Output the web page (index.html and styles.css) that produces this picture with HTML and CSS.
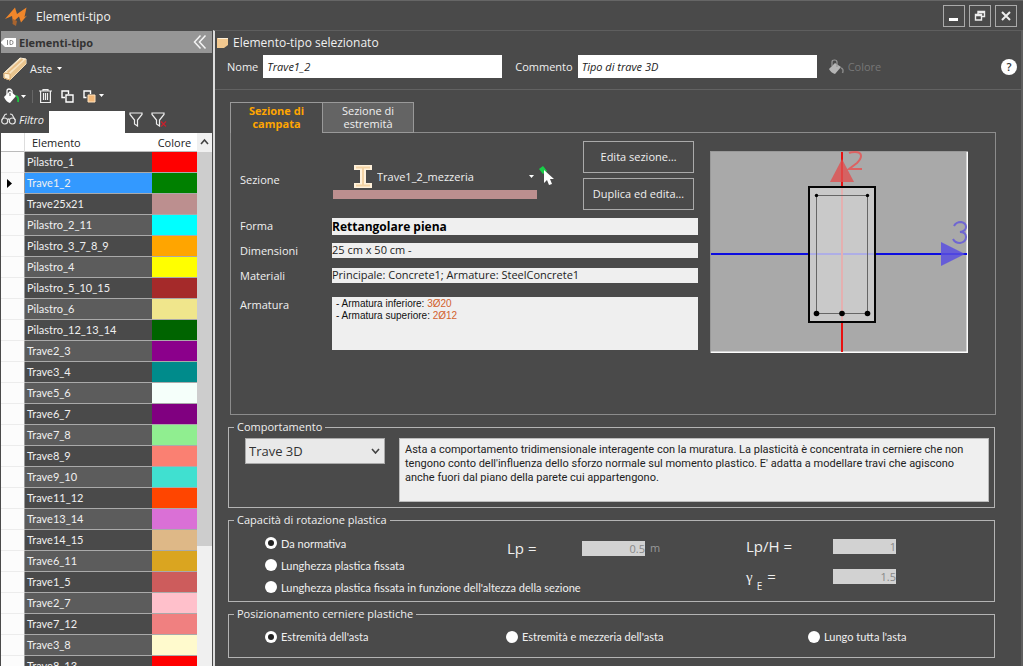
FILE: index.html
```html
<!DOCTYPE html>
<html lang="it">
<head>
<meta charset="utf-8">
<title>Elementi-tipo</title>
<link rel="stylesheet" href="styles.css">
</head>
<body>
<div class="window">
  <header class="titlebar">
    <svg class="logo" width="26" height="24" viewBox="0 0 26 24"><path d="M1 15 11 3.500 13 10 22.500 3.500 20.500 13 23 11.500 17 18.500 15 12.500 9 18 8 12Z" fill="#f0862a"/><path d="M12 22 8.500 20 9 15 13 17Z" fill="#a8642f"/></svg>
    <h1>Elementi-tipo</h1>
    <div class="winbtns">
      <button aria-label="Riduci a icona"><svg width="14" height="14"><path d="M2 9h9v3H2z" fill="#fff"/></svg></button>
      <button aria-label="Ripristina"><svg width="14" height="14" fill="none" stroke="#eee" stroke-width="1.4"><path d="M5 5V2.5h6.500v5H9M5 3.500h6.500M2.500 5.500h6v5.500h-6zM2.500 6.500h6"/></svg></button>
      <button aria-label="Chiudi"><svg width="14" height="14" stroke="#eee" stroke-width="2"><path d="M3 3l8 8M11 3l-8 8"/></svg></button>
    </div>
  </header>

  <aside class="sidebar">
    <div class="side-head">
      <svg width="16" height="9" viewBox="0 0 16 9"><path d="M4 0h11v9H4L0 5V4z" fill="#fff"/><path d="M6.500 2v5M9 2.500v4h1.500q1.500 0 1.500-2t-1.500-2z" stroke="#888" fill="none"/></svg>
      <h2>Elementi-tipo</h2>
      <button class="flat" aria-label="Comprimi"><svg width="14" height="16" viewBox="0 0 14 16" fill="none" stroke="#f4f4f4" stroke-width="1.500"><path d="M7.500 1.500 1.500 8l6 6.500M12.500 1.500 6.500 8l6 6.500"/></svg></button>
    </div>
    <button class="flat aste">
      <svg width="24" height="24" viewBox="0 0 24 24"><path d="M1 16 17 1l6 1v5L7 23l-6-2z" fill="#f7e3c0" stroke="#fff3dc"/><path d="M4.500 15.500 19.500 2" stroke="#e8bf88" stroke-width="2"/><path d="M7 17 23 2v5L7 23z" fill="#e8c48e"/><path d="M1 16l6 1v6l-6-2z" fill="#fff0d4" stroke="#d9a868"/></svg>
      <span>Aste</span>
      <svg width="5" height="3"><path d="M0 0h5L2.500 3z" fill="#fff"/></svg>
    </button>
    <div class="toolbar">
      <button class="flat" aria-label="Colore di riempimento"><svg width="23" height="16" viewBox="0 0 23 16"><path d="M1 9 7 3l6 5-6 7q-4-1-6-6z" fill="#fff"/><path d="M4 7V3q0-2 2-2t3 2v5" fill="none" stroke="#fff" stroke-width="1.300"/><path d="M7 5v3" stroke="#555"/><path d="M13 8q3 1 2 6" fill="none" stroke="#20c040" stroke-width="2"/><path d="M18 7h5l-2.500 3z" fill="#fff"/></svg></button>
      <span class="sep"></span>
      <button class="flat" aria-label="Elimina"><svg width="13" height="15" viewBox="0 0 13 15" fill="none" stroke="#eee" stroke-width="1.200"><path d="M0 2h13M4 2V.6h5V2M1.600 2v11.500h9.800V2M4.500 4v7M6.500 4v7M8.500 4v7"/></svg></button>
      <button class="flat" aria-label="Duplica"><svg width="13" height="13" viewBox="0 0 13 13" fill="none" stroke="#fff" stroke-width="1.400"><path d="M4 7.500H1V1h6.500v3M5 5h7v7H5z"/></svg></button>
      <button class="flat" aria-label="Incolla"><svg width="21" height="13" viewBox="0 0 21 13"><path d="M3.500 7.500H1V1h6.500v3" fill="none" stroke="#fff" stroke-width="1.400"/><path d="M5 5h7v7H5z" fill="#f3b878" stroke="#ffe2bd"/><path d="M16 4h5l-2.500 3z" fill="#fff"/></svg></button>
    </div>
    <div class="filter">
      <svg width="15" height="12" viewBox="0 0 15 12" fill="none" stroke="#e4e4e4" stroke-width="1.200"><circle cx="3.700" cy="8" r="3"/><circle cx="11.300" cy="8" r="3"/><path d="M.8 7 4 1.500 6 1M14.200 7 11 1.500 9 1M6.500 6.500q1-1 2 0"/></svg>
      <label for="filtro">Filtro</label>
      <input id="filtro" type="text">
      <button class="flat" aria-label="Applica filtro"><svg width="14" height="15" viewBox="0 0 14 15" fill="none" stroke="#eee" stroke-width="1.200"><path d="M1 1h12v1.500L8.500 8v6l-3-2V8L1 2.500z"/></svg></button>
      <button class="flat" aria-label="Rimuovi filtro"><svg width="16" height="15" viewBox="0 0 16 15" fill="none" stroke="#eee" stroke-width="1.200"><path d="M1 1h12v1.500L8.500 8v6l-3-2V8L1 2.500z"/><path d="M10 9.500l5 5M15 9.500l-5 5" stroke="#c8202c"/></svg></button>
    </div>
    <div class="list">
      <table>
        <thead><tr><th class="mark"></th><th class="name">Elemento</th><th class="col">Colore</th></tr></thead>
        <tbody id="rows"></tbody>
      </table>
      <div class="scroll"><svg width="15" height="19" fill="none" stroke="#444" stroke-width="1.600"><path d="M4 11l3.500-4 3.500 4"/></svg><div class="thumb"></div></div>
    </div>
  </aside>

  <main class="main">
    <section class="ident">
      <h2><svg width="11" height="12"><path d="M0 1h11v7l-4 3H0z" fill="#f2c88f"/><path d="M1 1.500h10" stroke="#fff0d8"/></svg>Elemento-tipo selezionato</h2>
      <div class="fields">
        <label for="nome">Nome</label><input id="nome" type="text" value="Trave1_2">
        <label for="commento" class="second">Commento</label><input id="commento" type="text" value="Tipo di trave 3D">
        <button class="flat paint" disabled><svg width="15" height="16" viewBox="0 0 15 16"><path d="M0 10 6 4l6 4-6 7q-4-1-6-5z" fill="#b5b5b5"/><path d="M3 7V3q0-2 2.500-2T8 3v5" fill="none" stroke="#999" stroke-width="1.200"/><path d="M12 9q3 1 1.500 5" fill="none" stroke="#888" stroke-width="1.500"/></svg>Colore</button>
        <button class="help" aria-label="Aiuto">?</button>
      </div>
    </section>

    <div class="content">
      <div class="tabs" role="tablist">
        <button class="tab active" role="tab">Sezione di<br>campata</button>
        <button class="tab" role="tab">Sezione di<br>estremità</button>
      </div>
      <section class="panel">
        <div class="form">
          <label for="sezione" class="sez-label">Sezione</label>
          <div class="sezione">
            <div class="picker">
              <div class="combo">
                <svg width="18" height="23" viewBox="0 0 18 23"><path d="M0 0h18v5h-6v13h6v5H0v-5h6V5H0z" fill="#fff1da"/><path d="M2 2.500h14M9 2.500v18M2 20.500h14" stroke="#f3d3a4" stroke-width="2" fill="none"/></svg>
                <select id="sezione"><option>Trave1_2_mezzeria</option></select>
                <svg width="5" height="3"><path d="M0 0h5L2.500 3z" fill="#fff"/></svg>
              </div>
              <div class="swatch"></div>
            </div>
            <button class="flat pick" aria-label="Seleziona"><svg width="16" height="20" viewBox="0 0 16 20"><path d="M0 3 4 0l4 5-4 3z" fill="#18d048"/><path d="M5 4v13l3-3 2 5 3-1-2-5h4z" fill="#fff"/></svg></button>
            <div class="edits"><button>Edita sezione…</button><button>Duplica ed edita…</button></div>
          </div>
          <span>Forma</span><output class="box forma">Rettangolare piena</output>
          <span>Dimensioni</span><output class="box">25 cm x 50 cm -</output>
          <span>Materiali</span><output class="box">Principale: Concrete1; Armature: SteelConcrete1</output>
          <span class="arm-label">Armatura</span>
          <div class="arm"><p>- Armatura inferiore: <b>3Ø20</b></p><p>- Armatura superiore: <b>2Ø12</b></p></div>
        </div>
        <svg class="drawing" width="258" height="202" viewBox="0 0 258 202">
          <rect width="258" height="202" fill="#f8f8f8"/><path d="M0 202V0h258" fill="none" stroke="#999" stroke-width="2"/>
          <rect x="1" y="1" width="256" height="200" fill="#a9a9a9"/>
          <path d="M257 1v200H1" fill="none" stroke="#fff"/>
          <path d="M1 103h256" stroke="#0c0ce0" stroke-width="2"/><path d="M132 1v200" stroke="#e81010" stroke-width="2"/>
          <path d="M120 31 132 8l12 23z" fill="#e05050" fill-opacity=".8"/><path d="M231 91v24l24-12z" fill="#5a50e0" fill-opacity=".85"/>
          <path d="M139 2q2-1 6-1 6 0 6 4 0 3-4 7l-8 6h13" fill="none" stroke="#dc6262" stroke-width="2"/>
          <path d="M244 75q2-4 7-4 5 1 5 5 0 4-6 5 6 0 6 5t-6 6q-5 0-7-4" fill="none" stroke="#6f66d2" stroke-width="2"/>
          <rect x="99" y="36" width="66" height="135" fill="#c9c9c9" stroke="#050505" stroke-width="2"/>
          <path d="M100 103h64" stroke="#aeaee6" stroke-width="2"/><path d="M132 37v133" stroke="#e5b0b0" stroke-width="2"/>
          <rect x="106.500" y="44.500" width="51" height="118" fill="none" stroke="#666"/>
          <g fill="#000"><circle cx="106.500" cy="44.500" r="1.700"/><circle cx="157.500" cy="44.500" r="1.700"/><circle cx="106.500" cy="162.500" r="2.800"/><circle cx="132" cy="162.500" r="2.800"/><circle cx="157.500" cy="162.500" r="2.800"/></g>
        </svg>
      </section>

      <fieldset class="comp">
        <legend>Comportamento</legend>
        <div class="comp-body">
          <div class="dropdown">
            <select aria-label="Comportamento"><option>Trave 3D</option></select>
            <svg width="9" height="6" fill="none" stroke="#444" stroke-width="1.600"><path d="M1 1l3.500 4L8 1"/></svg>
          </div>
          <p class="desc">Asta a comportamento tridimensionale interagente con la muratura. La plasticità è concentrata in cerniere che non tengono conto dell'influenza dello sforzo normale sul momento plastico. E' adatta a modellare travi che agiscono anche fuori dal piano della parete cui appartengono.</p>
        </div>
      </fieldset>

      <fieldset class="cap">
        <legend>Capacità di rotazione plastica</legend>
        <div class="cap-body">
          <div class="radios">
            <label><input type="radio" name="cap" checked>Da normativa</label>
            <label><input type="radio" name="cap">Lunghezza plastica fissata</label>
            <label><input type="radio" name="cap">Lunghezza plastica fissata in funzione dell'altezza della sezione</label>
          </div>
          <div class="lp"><label for="lp">Lp =</label><input id="lp" type="text" value="0.5" disabled><span>m</span></div>
          <div class="lph">
            <label for="lph">Lp/H =</label><input id="lph" type="text" value="1" disabled>
            <label for="ge"><i>γ</i><sub>E</sub>=</label><input id="ge" type="text" value="1.5" disabled>
          </div>
        </div>
      </fieldset>

      <fieldset class="pos">
        <legend>Posizionamento cerniere plastiche</legend>
        <div class="pos-body">
          <label><input type="radio" name="pos" checked>Estremità dell'asta</label>
          <label><input type="radio" name="pos">Estremità e mezzeria dell'asta</label>
          <label><input type="radio" name="pos">Lungo tutta l'asta</label>
        </div>
      </fieldset>
    </div>
  </main>
</div>
<script src="rows.js"></script>
</body>
</html>
```
FILE: rows.js
```js
const elements = [
  ["Pilastro_1", "#ff0000"], ["Trave1_2", "#008000"], ["Trave25x21", "#bc8f8f"],
  ["Pilastro_2_11", "#00ffff"], ["Pilastro_3_7_8_9", "#ffa500"], ["Pilastro_4", "#ffff00"],
  ["Pilastro_5_10_15", "#a52a2a"], ["Pilastro_6", "#f0e68c"], ["Pilastro_12_13_14", "#006400"],
  ["Trave2_3", "#8b008b"], ["Trave3_4", "#008b8b"], ["Trave5_6", "#f5fffa"],
  ["Trave6_7", "#800080"], ["Trave7_8", "#90ee90"], ["Trave8_9", "#fa8072"],
  ["Trave9_10", "#40e0d0"], ["Trave11_12", "#ff4500"], ["Trave13_14", "#da70d6"],
  ["Trave14_15", "#deb887"], ["Trave6_11", "#daa520"], ["Trave1_5", "#cd5c5c"],
  ["Trave2_7", "#ffc0cb"], ["Trave7_12", "#f08080"], ["Trave3_8", "#fffacd"],
  ["Trave8_13", "#ff0000"]
];
const selected = 1;
document.getElementById("rows").innerHTML = elements.map(([name, color], i) =>
  `<tr class="${i === selected ? "selected" : ""}"><td class="mark">${i === selected
    ? '<svg width="5" height="9"><path d="M0 0l5 4.500L0 9z"/></svg>' : ""}</td>` +
  `<td class="name">${name}</td><td class="col" style="background:${color}"></td></tr>`).join("");
```
FILE: styles.css
```css
* { box-sizing: border-box; }
body { margin: 0; background: #4a4a4a; color: #f0f0f0; font: 11px/13px "Open Sans", "Noto Sans", sans-serif; }
h1, h2, p { margin: 0; font-weight: 400; }
svg { display: block; flex: none; }
button, input, select { font: inherit; color: inherit; margin: 0; padding: 0; border: 0; border-radius: 0; }
button { background: none; }
.flat { display: flex; align-items: center; }

.window { display: grid; grid-template: 29px 1fr / 213px 1fr; height: 100vh; overflow: hidden; border-top: 1px solid #666; }
.titlebar { grid-column: 1 / -1; display: flex; align-items: center; gap: 6px; padding: 0 6px 0 4px; }
.titlebar h1 { font-size: 12px; line-height: 16px; flex: 1; padding-top: 3px; }
.winbtns { display: flex; gap: 4px; }
.winbtns button { width: 22px; height: 22px; border: 1px solid #aaa; display: grid; place-items: center; }

.sidebar { display: flex; flex-direction: column; min-height: 0; padding: 1px 1px 0; }
.side-head { display: flex; align-items: center; gap: 2px; height: 22px; background: #969696; color: #333; padding-right: 5px; }
.side-head h2 { flex: 1; font-size: 11px; font-weight: 700; }
.aste { height: 31px; gap: 3px; padding-left: 2px; }
.aste svg:last-child { margin-left: 2px; }
.toolbar { display: flex; align-items: center; height: 24px; gap: 9px; padding-left: 2px; }
.sep { width: 1px; height: 13px; background: #666; margin: 0 -3px; }
.filter { display: flex; align-items: center; height: 25px; padding-bottom: 3px; }
.filter label { font-style: italic; padding: 0 5px 0 3px; }
.filter input { width: 76px; height: 22px; background: #fff; color: #222; align-self: flex-start; margin-top: 3px; }
.filter button { margin-left: 4px; }
.filter button + button { margin-left: 8px; }
.list { display: grid; grid-template-columns: 1fr 15px; flex: 1; min-height: 0; overflow: hidden; }
table { border-collapse: separate; border-spacing: 0; table-layout: fixed; width: 100%; height: max-content; }
th { height: 19px; padding: 0; background: #fff; color: #222; font-weight: 400; border-right: 1px solid #ddd; border-bottom: 1px solid #bbb; text-align: center; }
th.name { text-align: left; padding-left: 7px; border-right: 0; }
th.col { border-right: 0; }
.mark { width: 24px; }
.col { width: 45px; }
td { height: 21px; padding: 0; border-bottom: 1px solid #aaa; }
td.mark { background: #fcfcfc; border-right: 1px solid #999; border-bottom-color: #ececec; }
td.mark svg { margin-left: 6px; fill: #000; }
td.name { padding: 0 0 1px 2px; background: #4a4a4a; }
tr:nth-child(even) .name { background: #5c5c5c; }
tr.selected .name { background: #3399ff; }
.scroll { background: #f0f0f0; }
.thumb { height: 394px; background: #cdcdcd; }
td.name, .radios, .pos-body { font-family: Lato, "Open Sans", sans-serif; }

.main { display: flex; flex-direction: column; min-width: 0; border-left: 2px solid #ddd; border-right: 2px solid #5e5e5e; border-top: 1px solid #5e5e5e; }
.ident { height: 59px; border-bottom: 1px solid #626262; padding: 5px 4px 0 2px; }
.ident h2 { display: flex; align-items: center; gap: 5px; font-size: 12px; line-height: 14px; }
.fields { display: flex; align-items: center; padding: 5px 0 0 10px; }
.fields input { flex: 0 1 239px; min-width: 60px; height: 23px; padding: 0 4px; background: #fff; color: #222; font-style: italic; margin-left: 5px; }
.fields .second { margin-left: 13px; }
.paint { margin-left: 12px; gap: 4px; color: #777; }
.help { margin-left: auto; width: 16px; height: 16px; border-radius: 8px; background: #fff; color: #333; font-weight: 600; line-height: 16px; }

.content { flex: 1; padding: 12px 26px 0 13px; }
.tabs { display: flex; margin-left: 2px; }
.tab { width: 92px; height: 31px; border: 1px solid #999; background: #646464; padding-bottom: 2px; }
.tab.active { position: relative; background: #4a4a4a; color: #ffa500; font-weight: 700; border-right: 0; border-bottom: 0; }
.panel { margin: -1px -1px 0 2px; border: 1px solid #8c8c8c; height: 283px; display: flex; gap: 12px; padding: 8px 27px 0 9px; }
.form { flex: 1; min-width: 0; display: grid; grid-template-columns: 92px 1fr; grid-template-rows: 69px 17px 17px 17px 57px; row-gap: 8px; align-items: center; height: max-content; }
.form > span { padding-bottom: 2px; }
.form .sez-label { padding-top: 8px; }
.sezione { display: flex; align-items: flex-start; align-self: start; }
.picker { width: 205px; padding: 24px 0 0 1px; }
.combo { display: flex; align-items: center; padding: 0 3px 0 21px; height: 23px; gap: 5px; }
.combo select { flex: 1; appearance: none; background: transparent; min-width: 0; }
.swatch { height: 9px; background: #bc8f8f; margin-top: 2px; }
.pick { margin: 25px 0 0 2px; }
.edits { margin-left: auto; margin-right: 4px; display: grid; gap: 5px; }
.edits button { width: 111px; height: 32px; border: 1px solid #aaa; padding-bottom: 2px; }
.box { background: #efefef; color: #222; height: 15px; line-height: 14px; align-self: start; white-space: nowrap; overflow: hidden; }
.forma { font-size: 12px; font-weight: 700; color: #000; height: 17px; line-height: 17px; }
.form .arm-label { align-self: start; padding-top: 5px; }
.arm { margin-top: 4px; height: 53px; background: #efefef; color: #111; font: 10px/12px "Liberation Sans", sans-serif; padding: 1px 4px; }
.arm b { font-weight: 400; color: #d2622e; }
.drawing { margin-top: 10px; }

fieldset { margin: 0; min-width: 0; border: 1px solid #b4b4b4; padding: 0; }
legend { margin-left: 5px; padding: 0 3px; line-height: 14px; }
.comp { margin-top: 5px; }
.comp-body { display: flex; gap: 14px; padding: 4px 5px 5px 16px; align-items: flex-start; }
.dropdown { display: grid; width: 140px; height: 26px; background: #e9e9e9; border: 1px solid #aaa; color: #333; align-items: center; }
.dropdown > * { grid-area: 1 / 1; }
.dropdown select { appearance: none; background: transparent; height: 24px; padding-left: 3px; font-size: 13px; }
.dropdown svg { justify-self: end; margin-right: 4px; pointer-events: none; }
.desc { flex: 1; min-height: 64px; background: #efefef; border: 1px solid #bbb; color: #222; padding: 4px 5px 0; font-family: Roboto, "Open Sans", sans-serif; line-height: 14px; }
.cap { margin-top: 5px; }
.pos { margin-top: 5px; }
.cap-body { display: grid; grid-template-columns: 242px 1fr 248px; padding-left: 36px; height: 74px; }
.radios { padding-top: 5px; display: grid; grid-auto-rows: 22px; align-content: start; white-space: nowrap; }
.radios label, .pos-body label { display: flex; align-items: center; gap: 4px; }
input[type="radio"] { appearance: none; width: 12px; height: 12px; border-radius: 6px; background: #fff; display: grid; place-items: center; }
input[type="radio"]:checked::before { content: ""; width: 6px; height: 6px; border-radius: 3px; background: #222; }
.lp, .lph { font-size: 15px; line-height: 20px; }
.lp { display: grid; grid-template-columns: 75px 63px 1fr; align-self: start; align-items: center; padding-top: 11px; }
.cap-body input[type="text"] { width: 63px; height: 15px; background: #d2d2d2; color: #888; text-align: right; font-size: 11px; line-height: 15px; }
.lp span { font-size: 11px; color: #999; padding-left: 5px; }
.lph { display: grid; grid-template-columns: 87px 63px; grid-auto-rows: 30px; align-items: center; padding-top: 4px; }
.lph i { font-family: "Liberation Serif", serif; font-style: normal; }
.lph sub { font-size: 10px; line-height: 0; vertical-align: -8px; padding: 0 5px 0 4px; }
.pos-body { display: grid; grid-template-columns: 241px 302px 1fr; padding: 9px 0 0 36px; height: 36px; align-items: start; }
```
